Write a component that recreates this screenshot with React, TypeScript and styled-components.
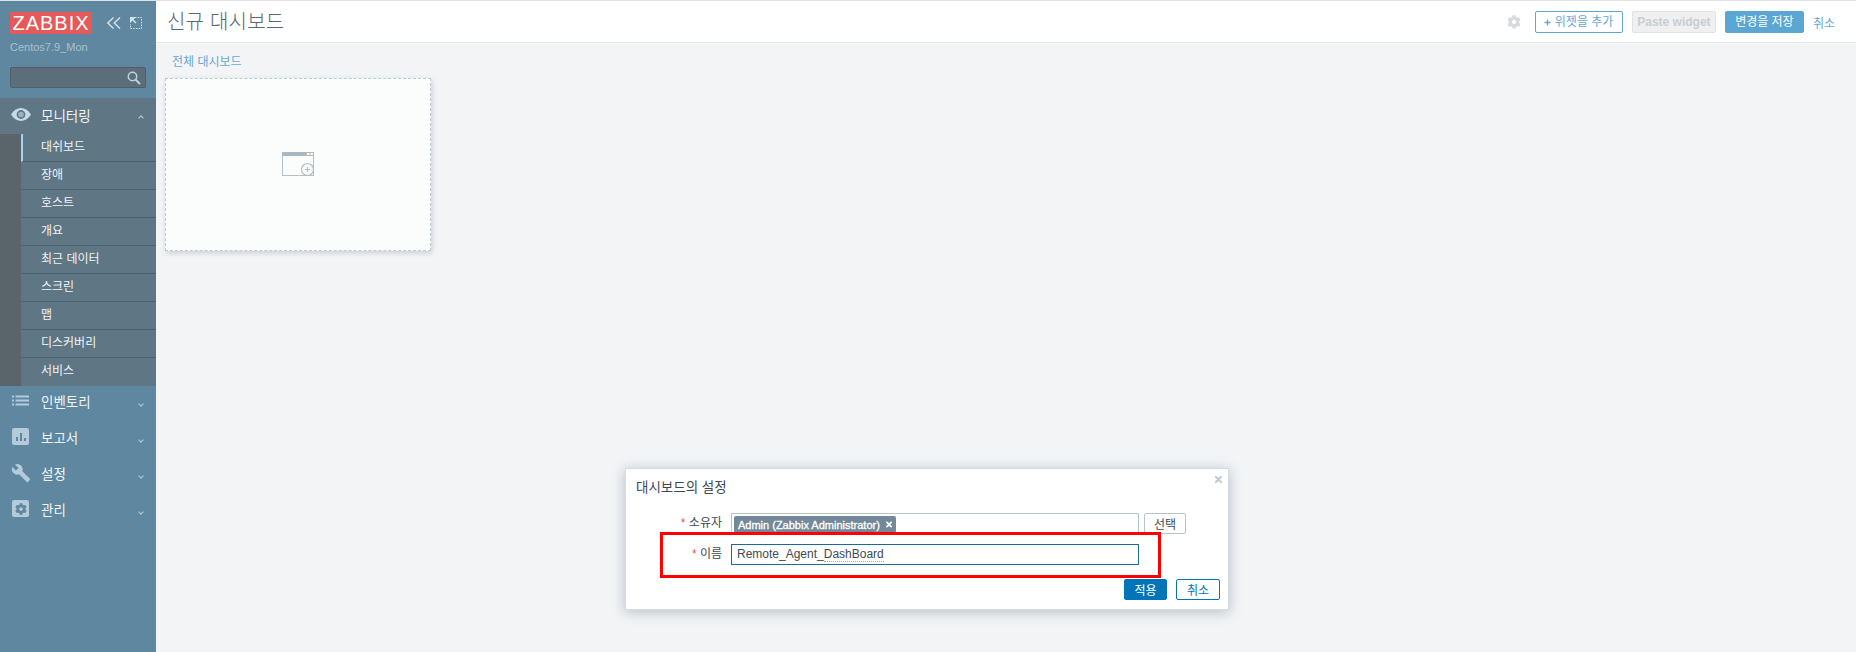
import React from 'react';
import styled, { createGlobalStyle } from 'styled-components';
import { FaCog, FaTimes, FaPlus } from 'react-icons/fa';
import { MdBuild } from 'react-icons/md';

const GlobalStyle = createGlobalStyle`
  html, body {
    margin: 0;
    height: 100%;
    overflow: hidden;
    background: #f2f4f6;
    font-family: "Liberation Sans", "Noto Sans CJK KR", sans-serif;
    font-size: 12px;
    color: #3d4a52;
  }
  * { box-sizing: border-box; }
`;

const submenuItems = ['대쉬보드', '장애', '호스트', '개요', '최근 데이터', '스크린', '맵', '디스커버리', '서비스'];

function App() {
  return (
    <Page>
      <GlobalStyle />
      <Sidebar>
        <Brand>
          <BrandTop>
            <Logo>ZABBIX</Logo>
            <BrandTools>
              <svg width="16" height="14" viewBox="0 0 16 14" fill="none" stroke="#d6e3ea" strokeWidth="1.4">
                <path d="M7.5 1.5 1.8 7l5.7 5.5M14 1.5 8.3 7l5.7 5.5" />
              </svg>
              <svg width="14" height="14" viewBox="0 0 14 14" fill="none" stroke="#d6e3ea">
                <path d="M6 1.5h6.5v11h-11V8" strokeDasharray="1.5 1.2" />
                <path d="M1 1h6L1 7z" fill="#d6e3ea" stroke="none" />
                <path d="M3 3l4 4" strokeWidth="1.5" />
              </svg>
            </BrandTools>
          </BrandTop>
          <ServerName>Centos7.9_Mon</ServerName>
          <SearchBox>
            <svg width="14" height="14" viewBox="0 0 14 14" fill="none" stroke="#c4d3dc" strokeWidth="1.5">
              <circle cx="5.5" cy="5.5" r="4.2" />
              <path d="M8.6 8.6 13 13" strokeWidth="2" />
            </svg>
          </SearchBox>
        </Brand>

        <Section $open>
          <SectionIcon>
            <svg width="20" height="13" viewBox="0 0 20 13">
              <path d="M0 6.5C3 2 6.5 0 10 0s7 2 10 6.5C17 11 13.5 13 10 13S3 11 0 6.5z" fill="#c6dbe8" />
              <circle cx="10" cy="6.5" r="3.6" fill="#9fb1bd" stroke="#5f7685" strokeWidth="1.6" />
            </svg>
          </SectionIcon>
          <SectionLabel>모니터링</SectionLabel>
          <Chevron $up />
        </Section>
        <SubmenuWrap>
          <Submenu>
            {submenuItems.map((item, i) => (
              <SubmenuItem key={item} $active={i === 0}>{item}</SubmenuItem>
            ))}
          </Submenu>
        </SubmenuWrap>

        <Section>
          <SectionIcon>
            <svg width="17" height="11" viewBox="0 0 17 11" fill="#b5cbd9">
              <rect x="0" y="0.5" width="2" height="2" />
              <rect x="0" y="4.5" width="2" height="2" />
              <rect x="0" y="8.5" width="2" height="2" />
              <rect x="3.5" y="0.5" width="13.5" height="2" />
              <rect x="3.5" y="4.5" width="13.5" height="2" />
              <rect x="3.5" y="8.5" width="13.5" height="2" />
            </svg>
          </SectionIcon>
          <SectionLabel>인벤토리</SectionLabel>
          <Chevron />
        </Section>
        <Section>
          <SectionIcon>
            <svg width="17" height="17" viewBox="0 0 17 17">
              <rect width="17" height="17" rx="2" fill="#b5cbd9" />
              <path d="M4 9h2v4H4zM8 5h2v8H8zM12 10h2v3h-2z" fill="#5f879f" />
            </svg>
          </SectionIcon>
          <SectionLabel>보고서</SectionLabel>
          <Chevron />
        </Section>
        <Section>
          <SectionIcon><MdBuild size={20} /></SectionIcon>
          <SectionLabel>설정</SectionLabel>
          <Chevron />
        </Section>
        <Section>
          <SectionIcon>
            <AdminIcon><FaCog size={12} /></AdminIcon>
          </SectionIcon>
          <SectionLabel>관리</SectionLabel>
          <Chevron />
        </Section>
      </Sidebar>

      <Main>
        <Header>
          <Title>신규 대시보드</Title>
          <HeaderActions>
            <GearButton><FaCog size={14} /></GearButton>
            <AddWidgetButton><FaPlus size={7} /> 위젯을 추가</AddWidgetButton>
            <PasteButton>Paste widget</PasteButton>
            <SaveButton>변경을 저장</SaveButton>
            <HeaderLink>취소</HeaderLink>
          </HeaderActions>
        </Header>
        <Content>
          <Breadcrumb>전체 대시보드</Breadcrumb>
          <WidgetPlaceholder>
            <svg width="32" height="24" viewBox="0 0 32 24" fill="none">
              <rect x="0.5" y="0.5" width="31" height="23" stroke="#b4c0c8" fill="#fbfcfc" />
              <rect x="0" y="0" width="32" height="4" fill="#acb8c0" />
              <rect x="25" y="1" width="2.5" height="2" fill="#fbfcfc" />
              <rect x="28.5" y="1" width="2.5" height="2" fill="#fbfcfc" />
              <circle cx="25.5" cy="17.5" r="6" fill="#fbfcfc" stroke="#b0bcc4" strokeWidth="1.2" />
              <path d="M25.5 15v5M23 17.5h5" stroke="#b0bcc4" />
            </svg>
          </WidgetPlaceholder>
        </Content>
      </Main>

      <Modal>
        <ModalClose><FaTimes size={11} /></ModalClose>
        <ModalTitle>대시보드의 설정</ModalTitle>
        <FormGrid>
          <FormLabel><Required>*</Required> 소유자</FormLabel>
          <OwnerField>
            <Tag>Admin (Zabbix Administrator)<FaTimes size={11} /></Tag>
          </OwnerField>
          <SelectButton>선택</SelectButton>
          <FormLabel><Required>*</Required> 이름</FormLabel>
          <NameField>
            <Misspelled $plain>Remote_Agent_</Misspelled>
            <Misspelled>DashBoard</Misspelled>
          </NameField>
        </FormGrid>
        <ModalFooter>
          <ApplyButton>적용</ApplyButton>
          <CancelButton>취소</CancelButton>
        </ModalFooter>
        <Highlight />
      </Modal>
    </Page>
  );
}

const Page = styled.div`
  display: flex;
  width: 1856px;
  height: 652px;
  overflow: hidden;
`;

const Sidebar = styled.aside`
  flex: 0 0 156px;
  background: #5f879f;
  border-top: 1px solid #dfe3e5;
`;

const Brand = styled.div`
  height: 97px;
  padding: 11px 10px 0;
`;

const BrandTop = styled.div`
  display: flex;
  align-items: center;
  justify-content: space-between;
  padding-right: 3px;
`;

const Logo = styled.div`
  width: 82px;
  height: 22px;
  background: #e45959;
  color: #fff;
  font-size: 20px;
  line-height: 22px;
  text-align: center;
  letter-spacing: 1px;
`;

const BrandTools = styled.div`
  display: flex;
  align-items: center;
  gap: 7px;
`;

const ServerName = styled.div`
  margin-top: 6px;
  color: #a9c1cf;
  font-size: 11px;
  line-height: 14px;
`;

const SearchBox = styled.div`
  display: flex;
  align-items: center;
  justify-content: flex-end;
  height: 21px;
  margin-top: 13px;
  padding-right: 4px;
  background: #5c6e7a;
  border: 1px solid #4f5f6a;
  border-radius: 2px;
`;

const Section = styled.div<{ $open?: boolean }>`
  display: flex;
  align-items: center;
  height: 36px;
  padding: 0 0 ${(p) => (p.$open ? '3px' : '7px')} 10px;
  background: ${(p) => (p.$open ? '#5f7685' : 'transparent')};
`;

const SectionIcon = styled.span`
  display: flex;
  align-items: center;
  justify-content: center;
  width: 21px;
  margin-right: 10px;
  color: #b5cbd9;
`;

const AdminIcon = styled.span`
  display: flex;
  align-items: center;
  justify-content: center;
  width: 17px;
  height: 17px;
  color: #5f879f;
  background: #b5cbd9;
  border-radius: 2px;
`;

const SectionLabel = styled.span`
  flex: 1;
  color: #f0f4f6;
  font-size: 13.5px;
`;

const Chevron = styled.span<{ $up?: boolean }>`
  width: 4px;
  height: 4px;
  margin-right: 13px;
  border-right: 1px solid #b5cbd9;
  border-bottom: 1px solid #b5cbd9;
  transform: ${(p) => (p.$up ? 'translateY(3px) rotate(-135deg)' : 'translateY(3px) rotate(45deg)')};
`;

const SubmenuWrap = styled.div`
  padding-left: 21px;
  background: #5a656b;
`;

const Submenu = styled.div`
  background: #5f7685;
`;

const SubmenuItem = styled.div<{ $active?: boolean }>`
  height: 28px;
  padding-left: ${(p) => (p.$active ? '18px' : '20px')};
  color: #f0f4f6;
  font-size: 12px;
  line-height: 27px;
  border-bottom: 1px solid #4f616d;
  border-left: ${(p) => (p.$active ? '2px solid #a8d3ee' : 'none')};
  &:last-child { border-bottom: none; }
`;

const Main = styled.main`
  flex: 1;
  min-width: 0;
`;

const Header = styled.header`
  display: flex;
  align-items: center;
  justify-content: space-between;
  height: 43px;
  padding: 1px 21px 0 11px;
  background: #fff;
  border-top: 1px solid #e2e2e2;
  border-bottom: 1px solid #e6e9ec;
`;

const Title = styled.h1`
  margin: 0;
  color: #5a6870;
  font-size: 20px;
  font-weight: 300;
  line-height: 24px;
  letter-spacing: 0.2px;
`;

const HeaderActions = styled.div`
  display: flex;
  align-items: center;
`;

const GearButton = styled.span`
  display: flex;
  margin-right: 14px;
  color: #d5dadd;
`;

const BaseButton = styled.button`
  height: 22px;
  padding: 0 7px;
  font-family: inherit;
  font-size: 12px;
  line-height: 18px;
  border-radius: 2px;
  white-space: nowrap;
`;

const AddWidgetButton = styled(BaseButton)`
  width: 88px;
  margin-right: 9px;
  color: #6aa7d0;
  background: #fff;
  border: 1px solid #5ea6d3;
  svg { vertical-align: 0; }
`;

const PasteButton = styled(BaseButton)`
  width: 84px;
  margin-right: 9px;
  padding: 0;
  color: #c8ced2;
  font-weight: 700;
  background: #f0f0f0;
  border: 1px solid #e0e3e5;
`;

const SaveButton = styled(BaseButton)`
  width: 79px;
  margin-right: 9px;
  color: #fff;
  background: #5ba6d3;
  border: 1px solid #5ba6d3;
`;

const HeaderLink = styled.a`
  color: #6aa7d0;
  font-size: 12px;
`;

const Content = styled.div`
  padding: 11px 0 0 9px;
`;

const Breadcrumb = styled.div`
  padding-left: 7px;
  color: #6aa7d0;
  font-size: 12px;
  line-height: 16px;
`;

const WidgetPlaceholder = styled.div`
  display: flex;
  align-items: center;
  justify-content: center;
  width: 266px;
  height: 173px;
  margin-top: 8px;
  padding-bottom: 2px;
  background: #fbfcfc;
  border: 1px dashed #bfcbd1;
  box-shadow: 1px 2px 5px rgba(120, 140, 155, 0.35);
`;

const Modal = styled.div`
  position: absolute;
  left: 625px;
  top: 468px;
  width: 604px;
  height: 142px;
  padding: 11px 8px 10px 10px;
  background: #fff;
  border: 1px solid #d5dde2;
  box-shadow: 0 2px 12px rgba(90, 110, 125, 0.4);
`;

const ModalClose = styled.span`
  position: absolute;
  top: 5px;
  right: 4px;
  color: #c0cad0;
`;

const ModalTitle = styled.div`
  color: #3d4a52;
  font-size: 13.5px;
  line-height: 16px;
`;

const FormGrid = styled.div`
  display: grid;
  grid-template-columns: 90px 408px 42px;
  grid-auto-rows: 21px;
  column-gap: 5px;
  row-gap: 10px;
  margin-top: 17px;
`;

const FormLabel = styled.div`
  padding-right: 4px;
  color: #3d4a52;
  font-size: 12px;
  line-height: 20px;
  text-align: right;
`;

const Required = styled.span`
  color: #e45959;
`;

const OwnerField = styled.div`
  padding: 2px;
  border: 1px solid #b8c4cb;
`;

const Tag = styled.span`
  display: inline-flex;
  align-items: center;
  width: 162px;
  height: 17px;
  padding: 0 4px;
  color: #fff;
  font-size: 11px;
  -webkit-text-stroke: 0.3px #fff;
  background: #73899a;
  border-radius: 2px;
  white-space: nowrap;
  svg { margin-left: 6px; }
`;

const SelectButton = styled.button`
  height: 21px;
  padding: 0;
  color: #3d4a52;
  font-family: inherit;
  font-size: 12px;
  background: #fff;
  border: 1px solid #b8c4cb;
  border-radius: 2px;
`;

const NameField = styled.div`
  grid-column: 2;
  padding: 0 5px;
  color: #3d4a52;
  font-size: 12px;
  line-height: 19px;
  background: #fff;
  border: 1px solid #1a6a9c;
`;

const Misspelled = styled.span<{ $plain?: boolean }>`
  border-bottom: ${(p) => (p.$plain ? 'none' : '1px dotted #e88')};
`;

const ModalFooter = styled.div`
  display: flex;
  justify-content: flex-end;
  gap: 9px;
  margin-top: 14px;
`;

const ApplyButton = styled.button`
  width: 43px;
  height: 21px;
  padding: 0;
  color: #fff;
  font-family: inherit;
  font-size: 12px;
  background: #0275b8;
  border: 1px solid #0275b8;
  border-radius: 2px;
`;

const CancelButton = styled(ApplyButton)`
  width: 44px;
  color: #0275b8;
  background: #fff;
`;

const Highlight = styled.div`
  position: absolute;
  left: 34px;
  top: 63px;
  width: 501px;
  height: 46px;
  border: 3px solid #f00;
  pointer-events: none;
`;

export default App;
